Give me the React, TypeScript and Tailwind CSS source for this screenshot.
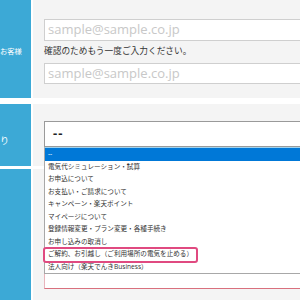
import React from "react";

const OPTIONS = [
  "電気代シミュレーション・試算",
  "お申込について",
  "お支払い・ご請求について",
  "キャンペーン・楽天ポイント",
  "マイページについて",
  "登録情報変更・プラン変更・各種手続き",
  "お申し込みの取消し",
  "ご解約、お引越し（ご利用場所の電気を止める）",
  "法人向け（楽天でんきBusiness）",
];

const jp = "font-['Open_Sans','Noto_Sans_CJK_JP',sans-serif]";

export default function App() {
  return (
    <div className={`relative flex h-[300px] w-[300px] flex-col overflow-hidden bg-white ${jp}`}>
      {/* メールアドレス */}
      <div className="flex h-[98px] shrink-0">
        <div className="flex w-[31px] shrink-0 items-center bg-[#3ca9d6] pt-[4px]">
          <span className="whitespace-nowrap text-[7.3px] text-white">お客様</span>
        </div>
        <div className="ml-[2px] flex-1 bg-[#f4f4f4] pl-[11px] pt-[19px]">
          <div className="flex h-[22px] w-[300px] items-center border border-[#cfcfcf] bg-white pl-[3px] text-[13px] text-[#c8c8c8]">
            sample@sample.co.jp
          </div>
          <div className="flex h-[22px] items-center whitespace-nowrap text-[8.7px] text-[#333]">
            確認のためもう一度ご入力ください。
          </div>
          <div className="flex h-[21px] w-[300px] items-center border border-[#cfcfcf] bg-white pl-[3px] text-[13px] text-[#c8c8c8]">
            sample@sample.co.jp
          </div>
        </div>
      </div>

      {/* お問い合わせ内容 */}
      <div className="mt-[6px] flex h-[62px] shrink-0">
        <div className="flex w-[31px] shrink-0 items-center bg-[#3ca9d6] pt-[12px]">
          <span className="text-[9px] text-white">り</span>
        </div>
        <div className="relative ml-[2px] flex-1 bg-[#f4f4f4] pl-[11px] pt-[17px]">
          <div className="flex h-[26px] w-[300px] items-center border border-[#9a9a9a] bg-white pl-[8px] text-[13px] font-bold tracking-[1px] text-[#222]">
            --
          </div>
          <div className="absolute left-[11px] top-[43px] z-10 w-[300px] border border-[#a8a8a8] border-t-[#9fd3f0] bg-white">
            <div className="flex h-[12.5px] items-center bg-[#0078d7] pl-[3px] text-[6.6px] text-white">--</div>
            {OPTIONS.map((o) => (
              <div key={o} className="flex h-[12.5px] items-center whitespace-nowrap pl-[3px] text-[6.6px] text-[#333]">
                {o}
              </div>
            ))}
            <div className="absolute left-[-2px] top-[99px] h-[16px] w-[155px] rounded-[3px] border-2 border-[#e04a80]" />
          </div>
        </div>
      </div>

      {/* 本文 */}
      <div className="mt-[3px] flex flex-1">
        <div className="w-[31px] shrink-0 bg-[#3ca9d6]" />
        <div className="ml-[2px] flex-1 bg-[#f4f4f4] pl-[11px] pt-[12px]">
          <div className="h-[108px] w-[300px] border border-[#e8b4bc] border-b-[#d9707e] bg-white" />
        </div>
      </div>
    </div>
  );
}
